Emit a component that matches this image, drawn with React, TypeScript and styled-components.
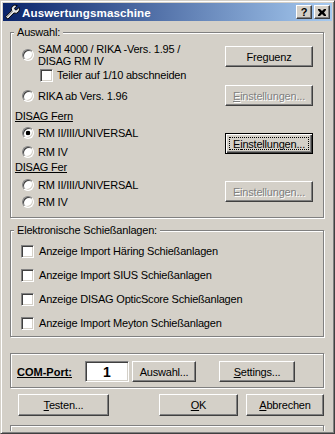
import React from 'react';
import styled, { createGlobalStyle } from 'styled-components';

const face = '#D4D0C8';

const GlobalStyle = createGlobalStyle`
  html, body {
    margin: 0;
    padding: 0;
    background: ${face};
  }
  body {
    font-family: "Liberation Sans", Arial, sans-serif;
    font-size: 11px;
    letter-spacing: -0.2px;
    color: #000;
  }
`;

const Window = styled.div`
  width: 335px;
  height: 434px;
  box-sizing: border-box;
  border: 1px solid;
  border-color: ${face} #404040 #404040 ${face};
  box-shadow: inset 1px 1px #fff, inset -1px -1px #808080;
  padding: 2px;
  background: ${face};
  display: flex;
  flex-direction: column;
  overflow: hidden;
`;

const TitleBar = styled.div`
  height: 18px;
  flex: none;
  display: flex;
  align-items: center;
  padding-left: 1px;
  background: linear-gradient(to right, #0a246a, #a6caf0);
`;

const TitleText = styled.span`
  margin-left: 2px;
  color: #fff;
  font-weight: bold;
  font-size: 11.6px;
  letter-spacing: 0.1px;
  flex: 1;
`;

const TitleButtons = styled.div`
  display: flex;
  gap: 2px;
  margin-right: 2px;
`;

const TitleButton = styled.div`
  width: 16px;
  height: 14px;
  box-sizing: border-box;
  border: 1px solid;
  border-color: #fff #404040 #404040 #fff;
  box-shadow: inset -1px -1px #808080;
  background: ${face};
  display: flex;
  align-items: center;
  justify-content: center;
  font-weight: bold;
  font-size: 11px;
  line-height: 10px;
  letter-spacing: 0;
`;

const Body = styled.div`
  flex: 1;
  min-height: 0;
  overflow: hidden;
  display: flex;
  flex-direction: column;
  padding: 0 8px 0 7px;
`;

const Group = styled.div<{ $h: number; $mt: number; $pad: string }>`
  position: relative;
  flex: none;
  height: ${(p) => p.$h}px;
  margin-top: ${(p) => p.$mt}px;
  padding: ${(p) => p.$pad};
  box-sizing: border-box;
  border: 1px solid #808080;
  box-shadow: inset 1px 1px #fff, 1px 1px #fff;
  display: flex;
  flex-direction: column;
`;

const GroupLabel = styled.span`
  position: absolute;
  top: -7px;
  left: 3px;
  padding: 0 3px;
  line-height: 13px;
  background: ${face};
  white-space: nowrap;
`;

const Block = styled.div<{ $h: number; $center?: boolean }>`
  display: flex;
  justify-content: space-between;
  align-items: ${(p) => (p.$center ? 'center' : 'flex-start')};
  height: ${(p) => p.$h}px;
`;

const Options = styled.div<{ $pt?: number }>`
  display: flex;
  flex-direction: column;
  padding: ${(p) => p.$pt ?? 0}px 0 0 7px;
`;

const Side = styled.div<{ $pt?: number }>`
  padding-top: ${(p) => p.$pt ?? 0}px;
`;

const OptionRow = styled.div<{ $h: number; $indent?: number; $gap?: number }>`
  display: flex;
  align-items: center;
  gap: ${(p) => p.$gap ?? 4}px;
  height: ${(p) => p.$h}px;
  margin-left: ${(p) => p.$indent ?? 0}px;
  white-space: nowrap;
`;

const Caption = styled.span`
  line-height: 12px;
`;

const SubHeading = styled.div<{ $h: number }>`
  height: ${(p) => p.$h}px;
  display: flex;
  align-items: center;
  text-decoration: underline;
`;

const Radio = styled.span<{ $checked?: boolean }>`
  flex: none;
  width: 12px;
  height: 12px;
  box-sizing: border-box;
  border-radius: 50%;
  border: 1px solid;
  border-color: #808080 #fff #fff #808080;
  box-shadow: inset 1px 1px #404040, inset -1px -1px ${face};
  background: ${(p) =>
    p.$checked ? 'radial-gradient(circle, #000 0 2px, #fff 2.6px)' : '#fff'};
`;

const Check = styled.span`
  flex: none;
  width: 13px;
  height: 13px;
  box-sizing: border-box;
  border: 1px solid;
  border-color: #808080 #fff #fff #808080;
  box-shadow: inset 1px 1px #404040, inset -1px -1px ${face};
  background: #fff;
`;

const Button = styled.button<{ $w: number; $h?: number; $off?: boolean; $default?: boolean }>`
  position: relative;
  width: ${(p) => p.$w}px;
  height: ${(p) => p.$h ?? 21}px;
  box-sizing: border-box;
  margin: 0;
  padding: 0;
  font: inherit;
  letter-spacing: inherit;
  background: ${face};
  color: ${(p) => (p.$off ? '#808080' : '#000')};
  text-shadow: ${(p) => (p.$off ? '1px 1px #fff' : 'none')};
  border: 1px solid;
  border-color: ${(p) => (p.$default ? '#000' : '#fff #404040 #404040 #fff')};
  box-shadow: ${(p) =>
    p.$default
      ? 'inset 1px 1px #fff, inset -1px -1px #404040, inset -2px -2px #808080'
      : 'inset -1px -1px #808080'};
  white-space: nowrap;
  &::after {
    content: '';
    display: ${(p) => (p.$default ? 'block' : 'none')};
    position: absolute;
    inset: 3px;
    border: 1px dotted #000;
  }
`;

const Key = styled.span`
  text-decoration: underline;
`;

const ComRow = styled.div`
  display: flex;
  align-items: center;
  height: 21px;
`;

const ComLabel = styled.span`
  width: 68px;
  flex: none;
  font-weight: bold;
  text-decoration: underline;
  letter-spacing: 0;
`;

const Field = styled.input`
  width: 44px;
  height: 21px;
  box-sizing: border-box;
  margin: 0 3px 0 0;
  padding: 0;
  border: 1px solid;
  border-color: #808080 #fff #fff #808080;
  box-shadow: inset 1px 1px #404040, inset -1px -1px ${face};
  background: #fff;
  font-family: "Liberation Sans", Arial, sans-serif;
  font-size: 14px;
  font-weight: bold;
  text-align: center;
  outline: none;
`;

const Spacer = styled.div<{ $w: number }>`
  width: ${(p) => p.$w}px;
  flex: none;
`;

const Footer = styled.div`
  display: flex;
  align-items: center;
  gap: 8px;
  margin-top: 6px;
  padding-left: 8px;
  flex: none;
`;

const FooterFill = styled.div`
  flex: 1;
`;

const Wrench = () => (
  <svg width="16" height="16" viewBox="0 0 16 16">
    <path
      d="M1.5 12.8 L7.6 6.7 A4 4 0 0 1 13.2 1.6 L10.6 4.2 L11 5.6 L12.4 6 L15 3.4 A4 4 0 0 1 9.9 9 L3.8 15.1 Z"
      fill="#e8e8e8"
      stroke="#000"
      strokeWidth="1"
      strokeLinejoin="round"
    />
    <path d="M3 13 L9 7" stroke="#9a9a9a" strokeWidth="1" />
  </svg>
);

const CloseGlyph = () => (
  <svg width="8" height="7" viewBox="0 0 8 7">
    <path d="M0 0h2l2 2 2-2h2v1L6 3.5 8 6v1H6L4 5 2 7H0V6l2-2.5L0 1z" fill="#000" />
  </svg>
);

export default function App() {
  return (
    <>
      <GlobalStyle />
      <Window>
        <TitleBar>
          <Wrench />
          <TitleText>Auswertungsmaschine</TitleText>
          <TitleButtons>
            <TitleButton>?</TitleButton>
            <TitleButton>
              <CloseGlyph />
            </TitleButton>
          </TitleButtons>
        </TitleBar>
        <Body>
          <Group $h={186} $mt={11} $pad="9px 10px 0 4px">
            <GroupLabel>Auswahl:</GroupLabel>
            <Block $h={40}>
              <Options>
                <OptionRow $h={26}>
                  <Radio />
                  <Caption>
                    SAM 4000 / RIKA -Vers. 1.95 /
                    <br />
                    DISAG RM IV
                  </Caption>
                </OptionRow>
                <OptionRow $h={14} $indent={18}>
                  <Check />
                  <Caption>Teiler auf 1/10 abschneiden</Caption>
                </OptionRow>
              </Options>
              <Side $pt={4}>
                <Button $w={88}>Freguenz</Button>
              </Side>
            </Block>
            <Block $h={27} $center>
              <Options>
                <OptionRow $h={14}>
                  <Radio />
                  <Caption>RIKA ab Vers. 1.96</Caption>
                </OptionRow>
              </Options>
              <Side>
                <Button $w={88} $off>
                  <Key>E</Key>instellungen...
                </Button>
              </Side>
            </Block>
            <SubHeading $h={14}>DISAG Fern</SubHeading>
            <Block $h={38}>
              <Options>
                <OptionRow $h={19}>
                  <Radio $checked />
                  <Caption>RM II/III/UNIVERSAL</Caption>
                </OptionRow>
                <OptionRow $h={19}>
                  <Radio />
                  <Caption>RM IV</Caption>
                </OptionRow>
              </Options>
              <Side $pt={10}>
                <Button $w={88} $default>
                  E<Key>i</Key>nstellungen...
                </Button>
              </Side>
            </Block>
            <SubHeading $h={12}>DISAG Fer</SubHeading>
            <Block $h={38}>
              <Options $pt={4}>
                <OptionRow $h={16}>
                  <Radio />
                  <Caption>RM II/III/UNIVERSAL</Caption>
                </OptionRow>
                <OptionRow $h={17}>
                  <Radio />
                  <Caption>RM IV</Caption>
                </OptionRow>
              </Options>
              <Side $pt={8}>
                <Button $w={88} $off>
                  Einstellun<Key>g</Key>en...
                </Button>
              </Side>
            </Block>
          </Group>

          <Group $h={107} $mt={12} $pad="8px 0 0 10px">
            <GroupLabel>Elektronische Schießanlagen:</GroupLabel>
            <OptionRow $h={24} $gap={5}>
              <Check />
              <Caption>Anzeige Import Häring Schießanlagen</Caption>
            </OptionRow>
            <OptionRow $h={24} $gap={5}>
              <Check />
              <Caption>Anzeige Import SIUS Schießanlagen</Caption>
            </OptionRow>
            <OptionRow $h={24} $gap={5}>
              <Check />
              <Caption>Anzeige DISAG OpticScore Schießanlagen</Caption>
            </OptionRow>
            <OptionRow $h={24} $gap={5}>
              <Check />
              <Caption>Anzeige Import Meyton Schießanlagen</Caption>
            </OptionRow>
          </Group>

          <Group $h={35} $mt={16} $pad="7px 0 0 6px">
            <ComRow>
              <ComLabel>COM-Port:</ComLabel>
              <Field readOnly value="1" />
              <Button $w={64}>Auswahl...</Button>
              <Spacer $w={23} />
              <Button $w={76}>
                <Key>S</Key>ettings...
              </Button>
            </ComRow>
          </Group>

          <Footer>
            <Button $w={91} $h={22}>
              <Key>T</Key>esten...
            </Button>
            <FooterFill />
            <Button $w={79} $h={22}>
              <Key>O</Key>K
            </Button>
            <Button $w={78} $h={22}>
              <Key>A</Key>bbrechen
            </Button>
          </Footer>

          <Group $h={30} $mt={9} $pad="0">
            <span />
          </Group>
        </Body>
      </Window>
    </>
  );
}
